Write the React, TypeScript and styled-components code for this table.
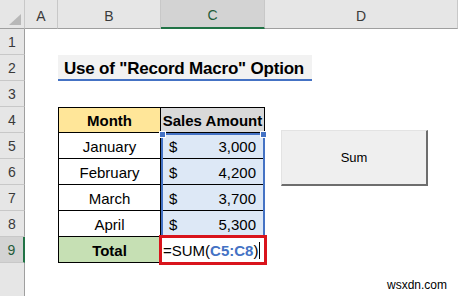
import React from "react";
import styled, { createGlobalStyle, css } from "styled-components";

const GlobalStyle = createGlobalStyle`
    html, body {
        margin: 0;
        padding: 0;
        background: #ffffff;
    }
    body {
        font-family: "Liberation Sans", Arial, sans-serif;
    }
`;

const HEADER_BG = "#e6e6e6";
const HEADER_ACTIVE_BG = "#d3d3d3";
const HEADER_LINE = "#c8c8c8";
const HEADER_EDGE = "#9f9f9f";
const EXCEL_GREEN = "#217346";
const RANGE_BLUE = "#4472c4";

const columns = ["A", "B", "C", "D"];

type Row = {
    month: string;
    amount: string;
};

const rows: Row[] = [
    { month: "January", amount: "3,000" },
    { month: "February", amount: "4,200" },
    { month: "March", amount: "3,700" },
    { month: "April", amount: "5,300" },
];

export default function App() {
    return (
        <>
            <GlobalStyle />
            <Sheet>
                <Corner>
                    <CornerTriangle />
                </Corner>
                {columns.map((c) => (
                    <ColHeader key={c} $active={c === "C"}>
                        {c}
                    </ColHeader>
                ))}
                {Array.from({ length: 9 }, (_, i) => (
                    <RowHeader key={i} $row={i + 1} $active={i + 1 === 9}>
                        {i + 1}
                    </RowHeader>
                ))}
                <RowHeaderFiller />

                <TitleCell>
                    <Title>Use of "Record Macro" Option</Title>
                </TitleCell>

                <Cell $row={4} $col="B" $bg="#ffe699" $bold $top $left>
                    Month
                </Cell>
                <Cell $row={4} $col="C" $bg="#d9d9d9" $bold $top>
                    Sales Amount
                </Cell>

                {rows.map((r, i) => (
                    <React.Fragment key={r.month}>
                        <Cell $row={5 + i} $col="B" $left>
                            {r.month}
                        </Cell>
                        <Cell $row={5 + i} $col="C" $bg="#dde8f6" $spread>
                            <span>$</span>
                            <span>{r.amount}</span>
                        </Cell>
                    </React.Fragment>
                ))}

                <Cell $row={9} $col="B" $bg="#c6e0b4" $bold $left>
                    Total
                </Cell>
                <FormulaCell>
                    =SUM(<RefText>C5:C8</RefText>)<Caret />
                </FormulaCell>

                <RangeBox>
                    <Handle $side="left" />
                    <Handle $side="right" />
                </RangeBox>

                <SumButton>Sum</SumButton>
                <Watermark>wsxdn.com</Watermark>
            </Sheet>
        </>
    );
}

const colIndex = (c: string) => columns.indexOf(c) + 2;

const Sheet = styled.div`
    position: relative;
    display: grid;
    grid-template-columns: 25px 33px 103px 104px 193px;
    grid-template-rows: 29px repeat(9, 26px) 33px;
    width: 458px;
    height: 296px;
    overflow: hidden;
    background: #ffffff;
`;

const Corner = styled.div`
    grid-column: 1;
    grid-row: 1;
    display: flex;
    align-items: flex-end;
    justify-content: flex-end;
    padding: 0 3px 3px 0;
    background: ${HEADER_BG};
    border-right: 1px solid ${HEADER_LINE};
    border-bottom: 1px solid ${HEADER_EDGE};
    box-sizing: border-box;
`;

const CornerTriangle = styled.div`
    width: 0;
    height: 0;
    border-left: 12px solid transparent;
    border-bottom: 11px solid #b8b8b8;
`;

const ColHeader = styled.div<{ $active?: boolean }>`
    grid-row: 1;
    display: flex;
    align-items: center;
    justify-content: center;
    padding-top: 3px;
    box-sizing: border-box;
    font-size: 14px;
    color: ${(p) => (p.$active ? "#1f5c3a" : "#3a3a3a")};
    background: ${(p) => (p.$active ? HEADER_ACTIVE_BG : HEADER_BG)};
    border-right: 1px solid ${HEADER_LINE};
    border-bottom: ${(p) => (p.$active ? `2px solid ${EXCEL_GREEN}` : `1px solid ${HEADER_EDGE}`)};
`;

const RowHeader = styled.div<{ $row: number; $active?: boolean }>`
    grid-column: 1;
    grid-row: ${(p) => p.$row + 1};
    display: flex;
    align-items: center;
    justify-content: center;
    box-sizing: border-box;
    font-size: 14px;
    color: ${(p) => (p.$active ? "#1f5c3a" : "#3a3a3a")};
    background: ${(p) => (p.$active ? HEADER_ACTIVE_BG : HEADER_BG)};
    border-bottom: 1px solid ${HEADER_LINE};
    border-right: ${(p) => (p.$active ? `2px solid ${EXCEL_GREEN}` : `1px solid ${HEADER_EDGE}`)};
`;

const RowHeaderFiller = styled.div`
    grid-column: 1;
    grid-row: 11;
    background: ${HEADER_BG};
    border-right: 1px solid ${HEADER_EDGE};
`;

const TitleCell = styled.div`
    grid-column: 3 / 6;
    grid-row: 3;
    display: flex;
`;

const Title = styled.div`
    width: 254px;
    box-sizing: border-box;
    padding: 4px 0 0 6px;
    background: #f2f2f2;
    border-bottom: 2px solid ${RANGE_BLUE};
    font-size: 17px;
    font-weight: bold;
    color: #000;
    white-space: nowrap;
    letter-spacing: -0.2px;
`;

const Cell = styled.div<{
    $row: number;
    $col: string;
    $bg?: string;
    $bold?: boolean;
    $top?: boolean;
    $left?: boolean;
    $spread?: boolean;
}>`
    grid-row: ${(p) => p.$row + 1};
    grid-column: ${(p) => colIndex(p.$col)};
    display: flex;
    align-items: center;
    justify-content: ${(p) => (p.$spread ? "space-between" : "center")};
    padding: ${(p) => (p.$spread ? "1px 8px 0 8px" : "1px 0 0 0")};
    box-sizing: border-box;
    background: ${(p) => p.$bg ?? "#ffffff"};
    font-size: 15px;
    font-weight: ${(p) => (p.$bold ? "bold" : "normal")};
    color: #000;
    border-right: 1px solid #000;
    border-bottom: 1px solid #000;
    ${(p) =>
        p.$top &&
        css`
            border-top: 1px solid #000;
        `}
    ${(p) =>
        p.$left &&
        css`
            border-left: 1px solid #000;
        `}
`;

const FormulaCell = styled.div`
    grid-row: 10;
    grid-column: 4;
    position: relative;
    z-index: 3;
    display: flex;
    align-items: center;
    padding: 1px 0 0 2px;
    box-sizing: border-box;
    background: #ffffff;
    font-size: 15px;
    color: #000;
    outline: 3px solid #d9141c;
    outline-offset: -1px;
`;

const RefText = styled.span`
    color: ${RANGE_BLUE};
    font-weight: bold;
`;

const Caret = styled.span`
    display: inline-block;
    width: 1px;
    height: 17px;
    margin-left: 1px;
    background: #000;
`;

const RangeBox = styled.div`
    grid-column: 4;
    grid-row: 6 / 10;
    position: relative;
    z-index: 2;
    border-left: 2px solid ${RANGE_BLUE};
    border-right: 2px solid ${RANGE_BLUE};
    border-top: 2px solid ${RANGE_BLUE};
    pointer-events: none;
`;

const Handle = styled.div<{ $side: "left" | "right" }>`
    position: absolute;
    top: -4px;
    ${(p) => (p.$side === "left" ? "left: -4px;" : "right: -4px;")}
    width: 5px;
    height: 5px;
    background: ${RANGE_BLUE};
    border: 1px solid #ffffff;
`;

const SumButton = styled.div`
    position: absolute;
    left: 281px;
    top: 130px;
    width: 147px;
    height: 56px;
    box-sizing: border-box;
    display: flex;
    align-items: center;
    justify-content: center;
    background: #efefef;
    border-top: 1px solid #e3e3e3;
    border-left: 1px solid #e3e3e3;
    border-right: 2px solid #6d6d6d;
    border-bottom: 2px solid #6d6d6d;
    font-size: 13px;
    color: #000;
`;

const Watermark = styled.div`
    position: absolute;
    right: 11px;
    bottom: 4px;
    font-size: 12px;
    color: #000;
`;
